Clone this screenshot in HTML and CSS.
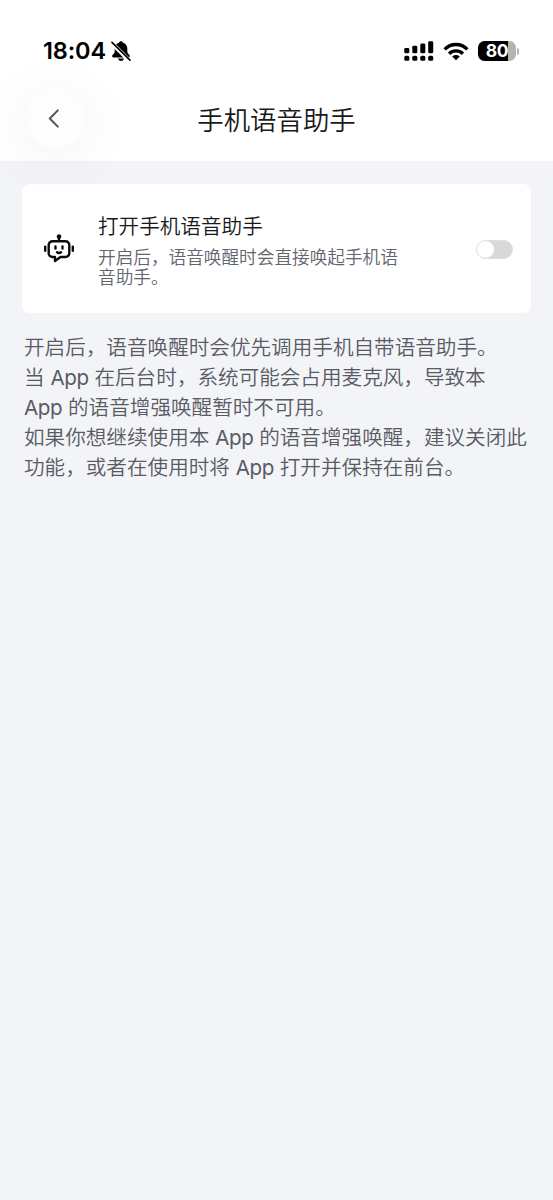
FILE: index.html
```
<!DOCTYPE html>
<html lang="zh-CN">
<head>
<meta charset="utf-8">
<title>手机语音助手</title>
<link rel="stylesheet" href="styles.css">
</head>
<body>
<header class="top">
  <div class="status">
    <div class="status-left">
      <span class="clock">18:04</span>
      <svg class="bell" width="22" height="22" viewBox="0 0 22 22">
        <path d="M11 1.200c-1 0-1.800.6-2 1.500C6.200 3.500 4.700 5.800 4.700 8.500v2.600c0 2-.8 2.700-2.100 4-.9 1-.6 2.300.8 2.300h15.200c1.400 0 1.700-1.300.8-2.300-1.300-1.300-2.100-2-2.100-4V8.500c0-2.700-1.500-5-4.300-5.800C12.800 1.800 12 1.200 11 1.200z"/>
        <path d="M8 18.500h6c-.3 1.500-1.500 2.400-3 2.400s-2.700-.9-3-2.400z"/>
        <path d="M1 2.200L19.200 20.400" stroke="#fff" stroke-width="4.200"/>
        <path d="M2 2.300L20 20.200" stroke="#000" stroke-width="1.700" stroke-linecap="round"/>
      </svg>
    </div>
    <div class="status-right">
      <svg width="30" height="21" viewBox="0 0 30 21">
        <rect x="0.300" y="6.900" width="5" height="5.400" rx="1.400"/>
        <rect x="8.300" y="4.800" width="5" height="7.500" rx="1.400"/>
        <rect x="16.300" y="2.600" width="5" height="9.700" rx="1.400"/>
        <rect x="24.200" y="0.200" width="5" height="12.100" rx="1.400"/>
        <rect x="0.300" y="14.800" width="5" height="5" rx="1.500"/>
        <rect x="8.300" y="14.800" width="5" height="5" rx="1.500"/>
        <rect x="16.300" y="14.800" width="5" height="5" rx="1.500"/>
        <rect x="24.200" y="14.800" width="5" height="5" rx="1.500"/>
      </svg>
      <svg class="wifi" width="26" height="19" viewBox="0 0 26 19" fill="none" stroke="#000" stroke-width="3.300">
        <path d="M1.700 7.300C8 .9 18 .9 24.300 7.300"/>
        <path d="M6 11.700c4-3.800 10-3.800 14 0"/>
        <path d="M13 18.200L9.200 14.400c2.200-2 5.400-2 7.600 0z" fill="#000" stroke="none"/>
      </svg>
      <div class="battery"><span class="level">80</span></div>
      <span class="battery-cap"></span>
    </div>
  </div>
  <nav class="nav">
    <button class="back" aria-label="返回">
      <svg width="12" height="19" viewBox="0 0 12 19" fill="none" stroke="#55565a" stroke-width="2" stroke-linecap="round" stroke-linejoin="round"><path d="M9.800 1.400L1.800 9.500l8 8.100"/></svg>
    </button>
    <h1 class="title">手机语音助手</h1>
  </nav>
</header>
<main class="content">
  <section class="card">
    <svg class="bot" width="32" height="30" viewBox="0 0 32 30" fill="none" stroke="#0b0b0d" stroke-width="2.400" stroke-linecap="round" stroke-linejoin="round">
      <path d="M9.500 7.200h13a3.800 3.800 0 0 1 3.800 3.800v8.200a3.800 3.800 0 0 1-3.800 3.800h-5L12 27V23H9.500a3.800 3.800 0 0 1-3.800-3.800V11a3.800 3.800 0 0 1 3.800-3.800z"/>
      <path d="M16 6.500V3M2.200 12.600v4.200M29.800 12.600v4.200M12.500 12.500v2M19.500 12.500v2"/>
      <path d="M14 18.200c1.200.9 2.800.9 4 0"/>
      <circle cx="16" cy="2.600" r="2.300" fill="#0b0b0d" stroke="none"/>
    </svg>
    <div class="text">
      <h2 class="name">打开手机语音助手</h2>
      <p class="desc">开启后，语音唤醒时会直接唤起手机语<br>音助手。</p>
    </div>
    <span class="switch" role="switch" aria-checked="false"></span>
  </section>
  <p class="note">开启后，语音唤醒时会优先调用手机自带语音助手。<br>当 <span class="latin">App</span> 在后台时，系统可能会占用麦克风，导致本<br><span class="latin">App</span> 的语音增强唤醒暂时不可用。<br>如果你想继续使用本 <span class="latin">App</span> 的语音增强唤醒，建议关闭此<br>功能，或者在使用时将 <span class="latin">App</span> 打开并保持在前台。</p>
</main>
</body>
</html>
```
FILE: styles.css
```
* { box-sizing: border-box; margin: 0; padding: 0; }
body {
  min-height: 1200px;
  background: #f3f4f7;
  font-family: Inter, "Noto Sans CJK SC", sans-serif;
  color: #18191b;
}
svg { display: block; flex: none; }
.top { height: 160.500px; background: #fff; }
.status {
  display: flex;
  justify-content: space-between;
  height: 76px;
  padding: 39px 34px 0 43px;
}
.status-left, .status-right { display: flex; align-items: center; height: 24px; }
.clock { font-size: 23.500px; font-weight: 600; line-height: 24px; letter-spacing: -0.150px; color: #000; width: 67px; white-space: nowrap; }
.wifi { margin-left: 9px; }
.battery {
  width: 38px;
  height: 20px;
  margin-left: 9px;
  border-radius: 6.500px;
  background: linear-gradient(90deg, #000 80%, #b4b4b4 80%);
  color: #fff;
  text-align: center;
}
.level { display: block; font-size: 17.500px; font-weight: 700; line-height: 20px; letter-spacing: -0.300px; }
.battery-cap { width: 2px; height: 7px; margin-left: 1px; border-radius: 0 2px 2px 0; background: #b4b4b4; }
.nav {
  display: grid;
  grid-template-columns: 59px 1fr 59px;
  align-items: center;
  height: 85px;
  padding: 0 26px;
}
.back {
  position: relative;
  z-index: 1;
  display: flex;
  align-items: center;
  justify-content: center;
  width: 59px;
  height: 59px;
  padding-right: 4px;
  border: 1px solid #fff;
  border-radius: 50%;
  background: #fdfdfd;
  box-shadow: 0 8px 60px rgba(0, 0, 0, 0.070);
}
.title { padding-top: 2px; font-size: 26.400px; font-weight: 350; line-height: 36px; text-align: center; }
.content { padding: 23.500px 22px; }
.card {
  display: flex;
  align-items: center;
  height: 129px;
  padding: 0 18px 0 21px;
  border-radius: 8px;
  background: #fff;
}
.text { flex: 1; margin-left: 23px; padding-top: 3px; }
.name { font-size: 20.600px; font-weight: 350; line-height: 30px; margin-bottom: 6px; }
.desc { font-size: 17.650px; font-weight: 350; line-height: 20px; color: #62646e; white-space: nowrap; }
.switch {
  width: 37px;
  height: 19px;
  margin-top: 1px;
  border-radius: 10px;
  background: #d9d9d9;
  border: 1px solid #dedede;
}
.switch::before {
  content: "";
  display: block;
  width: 17px;
  height: 17px;
  border-radius: 50%;
  background: #fff;
}
.note { margin: 20px 0 0 2px; font-size: 20.600px; font-weight: 350; line-height: 30px; color: #595b64; white-space: nowrap; }
.latin { font-weight: 400; letter-spacing: -0.400px; }
```
